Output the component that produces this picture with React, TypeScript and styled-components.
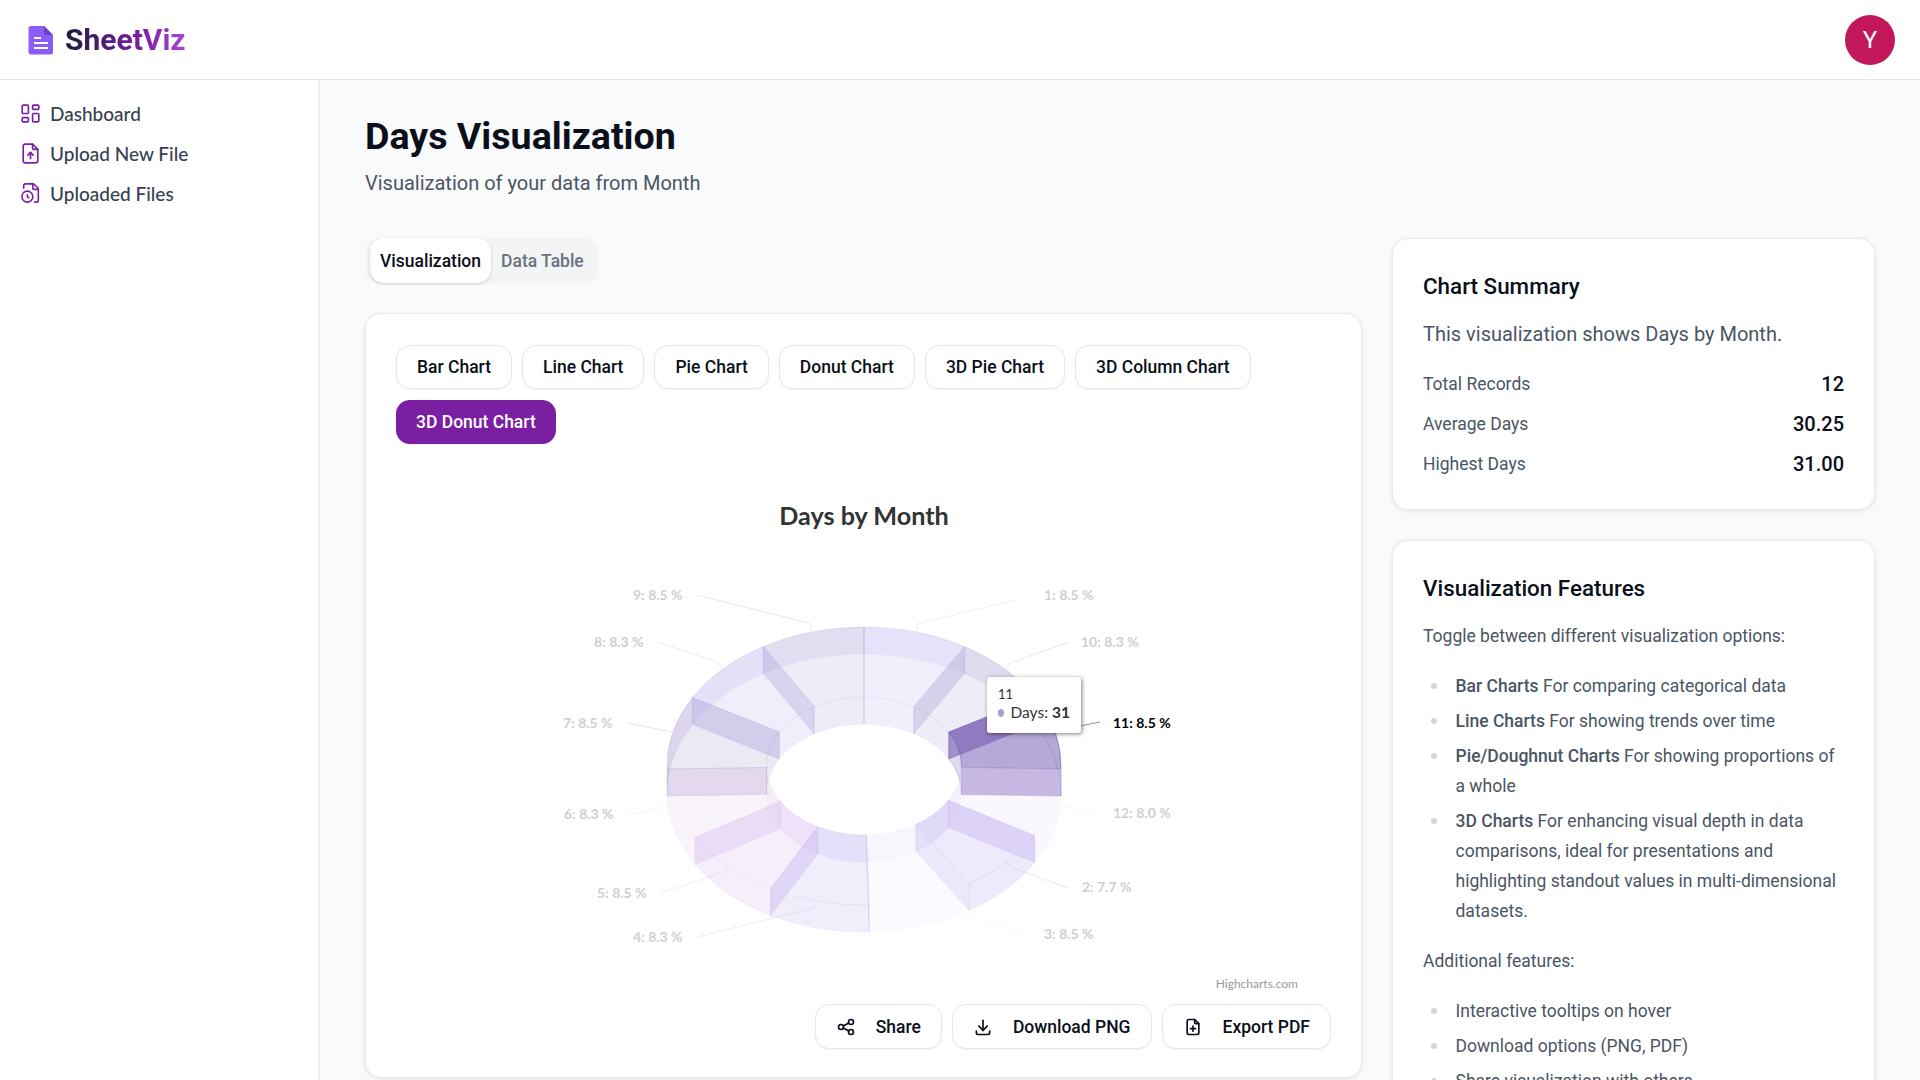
import { FC } from 'react';
import styled, { createGlobalStyle } from 'styled-components';
import { FileClock } from 'lucide-react';
import {
    TbDownload,
    TbFilePlus,
    TbFileUpload,
    TbLayoutDashboard,
    TbShare,
} from 'react-icons/tb';

const GlobalStyle = createGlobalStyle`
    html, body {
        margin: 0;
        height: 100%;
        overflow: hidden;
        background: #f9fafb;
        font-family: Roboto, "Liberation Sans", sans-serif;
    }
    * { box-sizing: border-box; }
`;

const Shell = styled.div`
    height: 100vh;
    display: flex;
    flex-direction: column;
`;

const Header = styled.header`
    height: 80px;
    flex: none;
    background: #fff;
    border-bottom: 1px solid #e5e7eb;
    display: flex;
    align-items: center;
    justify-content: space-between;
    padding: 0 25px 0 28px;
`;

const Brand = styled.div`
    display: flex;
    align-items: center;
    gap: 11px;
`;

const BrandName = styled.span`
    font-size: 30px;
    font-weight: 700;
    background: linear-gradient(90deg, #1f1b3d 0%, #7b1fa2 62%, #ab47d6 100%);
    -webkit-background-clip: text;
    background-clip: text;
    color: transparent;
`;

const Avatar = styled.div`
    width: 50px;
    height: 50px;
    border-radius: 50%;
    background: #c2185b;
    color: #fff;
    font-size: 24px;
    display: flex;
    align-items: center;
    justify-content: center;
`;

const Body = styled.div`
    flex: 1;
    min-height: 0;
    display: flex;
`;

const Sidebar = styled.nav`
    width: 320px;
    flex: none;
    background: #fff;
    border-right: 2px solid #eef0f3;
    padding: 18px 18px;
    display: flex;
    flex-direction: column;
    gap: 10px;
`;

const NavItem = styled.a`
    height: 30px;
    display: flex;
    align-items: center;
    gap: 7px;
    font-family: Lato, sans-serif;
    font-size: 19px;
    font-weight: 500;
    color: #374151;
`;

const NavIcon = styled.span`
    width: 25px;
    flex: none;
    display: flex;
    align-items: center;
    justify-content: center;
    color: #7b1fa2;
`;

const Main = styled.main`
    flex: 1;
    min-width: 0;
    padding: 30px 45px 0;
    overflow: hidden;
`;

const Title = styled.h1`
    margin: 0;
    font-size: 37.6px;
    line-height: 52px;
    font-weight: 700;
    color: #0b0f1a;
`;

const Subtitle = styled.p`
    margin: 7px 0 0;
    font-size: 20px;
    line-height: 28px;
    color: #4b5563;
`;

const Columns = styled.div`
    margin-top: 41px;
    display: grid;
    grid-template-columns: minmax(0, 1fr) 483px;
    column-gap: 30px;
    align-items: start;
`;

const Tabs = styled.div`
    display: inline-flex;
    height: 45px;
    padding: 0 5px;
    background: #f3f4f6;
    border-radius: 14px;
`;

const Tab = styled.div<{ $active?: boolean }>`
    display: flex;
    align-items: center;
    padding: 0 10px;
    font-size: 17.5px;
    font-weight: 500;
    border-radius: 14px;
    color: ${(p) => (p.$active ? '#0b0f1a' : '#6b7280')};
    background: ${(p) => (p.$active ? '#fff' : 'transparent')};
    box-shadow: ${(p) => (p.$active ? '0 1px 3px rgba(0,0,0,.18)' : 'none')};
`;

const Card = styled.section`
    background: #fff;
    border: 1px solid #e9ebef;
    border-radius: 16px;
    box-shadow: 0 1px 4px rgba(0, 0, 0, 0.1);
    padding: 30px;
`;

const ChartCard = styled(Card)`
    margin-top: 30px;
    height: 765px;
`;

const ChipRow = styled.div`
    display: flex;
    flex-wrap: wrap;
    gap: 11px 10px;
    padding-top: 1px;
`;

const Chip = styled.button<{ $active?: boolean }>`
    height: 44px;
    padding: 0 20px;
    border-radius: 14px;
    font-family: inherit;
    font-size: 17.5px;
    font-weight: 500;
    border: ${(p) => (p.$active ? 'none' : '1px solid #e5e7eb')};
    background: ${(p) => (p.$active ? '#7b1fa2' : '#fff')};
    color: ${(p) => (p.$active ? '#fff' : '#0b0f1a')};
    box-shadow: 0 1px 2px rgba(0, 0, 0, 0.05);
`;

const ChartBox = styled.div`
    position: relative;
    margin-top: 49px;
    width: 935px;
    height: 500px;
    svg { display: block; }
`;

const ChartText = styled.text<{ $hot?: boolean }>`
    font-family: Lato, sans-serif;
    font-size: 14px;
    font-weight: 700;
    fill: ${(p) => (p.$hot ? '#000' : '#cfcfcf')};
`;

const ChartTitle = styled.text`
    font-family: Lato, sans-serif;
    font-size: 25.2px;
    font-weight: 700;
    fill: #333;
`;

const Credits = styled.text`
    font-family: Lato, sans-serif;
    font-size: 12px;
    fill: #999;
`;

const Tooltip = styled.div`
    position: absolute;
    left: 591px;
    top: 184px;
    width: 94px;
    height: 56px;
    padding: 9px 11px;
    background: #fff;
    border-radius: 3px;
    box-shadow: 1px 1px 4px rgba(0, 0, 0, 0.5);
    font-family: Lato, sans-serif;
    color: #333;
`;

const TooltipHead = styled.div`
    font-size: 13px;
    line-height: 17px;
`;

const TooltipRow = styled.div`
    display: flex;
    align-items: center;
    font-size: 15.5px;
    line-height: 19px;
    white-space: nowrap;
    b { margin-left: 4px; font-weight: 700; }
`;

const Dot = styled.i`
    width: 8px;
    height: 8px;
    margin-right: 6px;
    border-radius: 50%;
    background: #ae9dd2;
`;

const Actions = styled.div`
    margin-top: 11px;
    display: flex;
    justify-content: flex-end;
    gap: 10px;
`;

const ActionButton = styled.button`
    height: 45px;
    padding: 0 20px;
    display: flex;
    align-items: center;
    gap: 20px;
    background: #fff;
    border: 1px solid #e5e7eb;
    border-radius: 14px;
    box-shadow: 0 1px 2px rgba(0, 0, 0, 0.05);
    font-family: inherit;
    font-size: 17.5px;
    font-weight: 500;
    color: #0b0f1a;
`;

const Side = styled.aside`
    display: flex;
    flex-direction: column;
    gap: 30px;
`;

const CardTitle = styled.h2`
    margin: 0;
    font-size: 22.4px;
    line-height: 35px;
    font-weight: 500;
    color: #0b0f1a;
`;

const Lead = styled.p`
    margin: 15px 0 0;
    font-size: 20px;
    line-height: 30px;
    color: #4b5563;
`;

const Stats = styled.dl`
    margin: 20px 0 0;
    display: flex;
    flex-direction: column;
    gap: 10px;
`;

const Stat = styled.div`
    height: 30px;
    display: flex;
    align-items: center;
    justify-content: space-between;
    dt { font-size: 17.5px; color: #4b5563; }
    dd { margin: 0; font-size: 20px; font-weight: 500; color: #0b0f1a; }
`;

const Para = styled.p`
    margin: 20px 0 0;
    font-size: 17.5px;
    line-height: 30px;
    color: #4b5563;
    ${CardTitle} + & { margin-top: 15px; }
`;

const BulletList = styled.ul`
    margin: 20px 0 0;
    padding: 0 0 0 32.5px;
    list-style: none;
    font-size: 17.5px;
    line-height: 30px;
    color: #4b5563;
    li { position: relative; margin-top: 5px; }
    li:first-child { margin-top: 0; }
    li::before {
        content: '';
        position: absolute;
        left: -25px;
        top: 12px;
        width: 6px;
        height: 6px;
        border-radius: 50%;
        background: #d1d5db;
    }
    b { font-weight: 500; }
`;

const chips = ['Bar Chart', 'Line Chart', 'Pie Chart', 'Donut Chart', '3D Pie Chart', '3D Column Chart', '3D Donut Chart'];

const CX = 864;
const CY = 766;
const OUT = { rx: 197, ry: 139 };
const INN = { rx: 97.5, ry: 69 };
const DEPTH = 27;

const slices = [
    { id: 1, days: 31, color: '#b9aff0' },
    { id: 10, days: 30, color: '#aaa0d2' },
    { id: 11, days: 31, color: '#765ab4' },
    { id: 12, days: 29, color: '#e6d7fa' },
    { id: 2, days: 28, color: '#aa96eb' },
    { id: 3, days: 31, color: '#ebe6fa' },
    { id: 4, days: 30, color: '#b9aaf0' },
    { id: 5, days: 31, color: '#cdaff0' },
    { id: 6, days: 30, color: '#e0c8ec' },
    { id: 7, days: 31, color: '#a08cca' },
    { id: 8, days: 30, color: '#b4aaeb' },
    { id: 9, days: 31, color: '#aaa5d7' },
];

const labels = [
    { id: 1, text: '1: 8.5 %', x: 1044, y: 600, line: '1015,600 917,624 916,632' },
    { id: 10, text: '10: 8.3 %', x: 1081, y: 647, line: '1069,642 1010,663 1005,668' },
    { id: 11, text: '11: 8.5 %', x: 1113, y: 728, line: '1100,722 1080,726', hot: true },
    { id: 12, text: '12: 8.0 %', x: 1113, y: 818, line: '1053,803 1100,814' },
    { id: 2, text: '2: 7.7 %', x: 1082, y: 892, line: '1007,863 1012,868 1069,888' },
    { id: 3, text: '3: 8.5 %', x: 1044, y: 939, line: '923,905 1027,933' },
    { id: 4, text: '4: 8.3 %', x: 633, y: 942, line: '697,937 813,908 815,902' },
    { id: 5, text: '5: 8.5 %', x: 597, y: 898, line: '661,893 723,872 727,867' },
    { id: 6, text: '6: 8.3 %', x: 564, y: 819, line: '628,815 673,805' },
    { id: 7, text: '7: 8.5 %', x: 563, y: 728, line: '627,723 672,732' },
    { id: 8, text: '8: 8.3 %', x: 594, y: 647, line: '658,642 717,662 723,668' },
    { id: 9, text: '9: 8.5 %', x: 633, y: 600, line: '697,595 809,623 812,631' },
];

type Ring = { rx: number; ry: number };

const pt = (r: Ring, a: number, dy = 0) =>
    `${(CX + r.rx * Math.sin(a)).toFixed(2)} ${(CY - r.ry * Math.cos(a) + dy).toFixed(2)}`;

const arc = (r: Ring, to: number, sweep: number, dy = 0) =>
    `A${r.rx} ${r.ry} 0 0 ${sweep} ${pt(r, to, dy)}`;

const band = (r: Ring, a0: number, a1: number) =>
    `M${pt(r, a0)} ${arc(r, a1, 1)} L${pt(r, a1, DEPTH)} ${arc(r, a0, 0, DEPTH)} Z`;

const side = (a: number) =>
    `M${pt(OUT, a)} L${pt(INN, a)} L${pt(INN, a, DEPTH)} L${pt(OUT, a, DEPTH)} Z`;

const face = (a0: number, a1: number) =>
    `M${pt(OUT, a0)} ${arc(OUT, a1, 1)} L${pt(INN, a1)} ${arc(INN, a0, 0)} Z`;

const total = slices.reduce((s, v) => s + v.days, 0);
let running = 0;
const wedges = slices.map((s) => {
    const a0 = (running / total) * Math.PI * 2;
    running += s.days;
    const a1 = (running / total) * Math.PI * 2;
    return { ...s, a0, a1 };
});

const colorOf = (id: number) => slices.find((s) => s.id === id)?.color ?? '#ccc';

const Donut: FC = () => (
    <svg width={935} height={500} viewBox="396 493 935 500">
        <ChartTitle x={864} y={525} textAnchor="middle">Days by Month</ChartTitle>
        {labels.map((l) => (
            <polyline
                key={l.text}
                points={l.line}
                fill="none"
                stroke={l.hot ? '#9b85c9' : colorOf(l.id)}
                strokeOpacity={l.hot ? 1 : 0.25}
                strokeWidth={1}
            />
        ))}
        {wedges.map((w) => {
            const hot = w.id === 11;
            const parts = [
                { d: band(OUT, w.a0, w.a1), alpha: hot ? 0.02 : 0.2 },
                { d: band(INN, w.a0, w.a1), alpha: hot ? 0.22 : 0.2 },
                { d: side(w.a0), alpha: hot ? 0.53 : 0.2 },
                { d: side(w.a1), alpha: hot ? 0.53 : 0.2 },
                { d: face(w.a0, w.a1), alpha: hot ? 0.53 : 0.2 },
            ];
            return (
                <g key={w.id}>
                    {parts.map((part, i) => (
                        <path
                            key={i}
                            d={part.d}
                            fill={w.color}
                            fillOpacity={part.alpha}
                            stroke={w.color}
                            strokeOpacity={hot ? 0.3 : 0.1}
                            strokeWidth={1}
                        />
                    ))}
                </g>
            );
        })}
        {labels.map((l) => (
            <ChartText key={l.text} x={l.x} y={l.y} $hot={l.hot}>{l.text}</ChartText>
        ))}
        <Credits x={1298} y={988} textAnchor="end">Highcharts.com</Credits>
    </svg>
);

const LogoMark: FC = () => (
    <svg width="26" height="30" viewBox="0 0 26 30">
        <path d="M3 1h13l9 9v17a2.500 2.500 0 0 1-2.500 2.500h-19.500a2.500 2.500 0 0 1-2.500-2.500v-23.500a2.500 2.500 0 0 1 2.500-2.500z" fill="#8b5cf6" />
        <path d="M16 1l9 9h-6.500a2.500 2.500 0 0 1-2.500-2.500z" fill="#6d3fd1" />
        <path d="M6 13h7M6 18h14M6 23h14" stroke="#fff" strokeWidth="2" fill="none" />
    </svg>
);

export default function App() {
    return (
        <Shell>
            <GlobalStyle />
            <Header>
                <Brand>
                    <LogoMark />
                    <BrandName>SheetViz</BrandName>
                </Brand>
                <Avatar>Y</Avatar>
            </Header>
            <Body>
                <Sidebar>
                    <NavItem><NavIcon><TbLayoutDashboard size={25} strokeWidth={1.6} /></NavIcon>Dashboard</NavItem>
                    <NavItem><NavIcon><TbFileUpload size={25} strokeWidth={1.6} /></NavIcon>Upload New File</NavItem>
                    <NavItem><NavIcon><FileClock size={22} strokeWidth={1.75} /></NavIcon>Uploaded Files</NavItem>
                </Sidebar>
                <Main>
                    <Title>Days Visualization</Title>
                    <Subtitle>Visualization of your data from Month</Subtitle>
                    <Columns>
                        <div>
                            <Tabs>
                                <Tab $active>Visualization</Tab>
                                <Tab>Data Table</Tab>
                            </Tabs>
                            <ChartCard>
                                <ChipRow>
                                    {chips.map((c) => (
                                        <Chip key={c} $active={c === '3D Donut Chart'}>{c}</Chip>
                                    ))}
                                </ChipRow>
                                <ChartBox>
                                    <Donut />
                                    <Tooltip>
                                        <TooltipHead>11</TooltipHead>
                                        <TooltipRow><Dot />Days: <b>31</b></TooltipRow>
                                    </Tooltip>
                                </ChartBox>
                                <Actions>
                                    <ActionButton><TbShare size={20} />Share</ActionButton>
                                    <ActionButton><TbDownload size={20} />Download PNG</ActionButton>
                                    <ActionButton><TbFilePlus size={20} />Export PDF</ActionButton>
                                </Actions>
                            </ChartCard>
                        </div>
                        <Side>
                            <Card>
                                <CardTitle>Chart Summary</CardTitle>
                                <Lead>This visualization shows Days by Month.</Lead>
                                <Stats>
                                    <Stat><dt>Total Records</dt><dd>12</dd></Stat>
                                    <Stat><dt>Average Days</dt><dd>30.25</dd></Stat>
                                    <Stat><dt>Highest Days</dt><dd>31.00</dd></Stat>
                                </Stats>
                            </Card>
                            <Card>
                                <CardTitle>Visualization Features</CardTitle>
                                <Para>Toggle between different visualization options:</Para>
                                <BulletList>
                                    <li><b>Bar Charts</b> For comparing categorical data</li>
                                    <li><b>Line Charts</b> For showing trends over time</li>
                                    <li><b>Pie/Doughnut Charts</b> For showing proportions of a whole</li>
                                    <li><b>3D Charts</b> For enhancing visual depth in data comparisons, ideal for presentations and highlighting standout values in multi-dimensional datasets.</li>
                                </BulletList>
                                <Para>Additional features:</Para>
                                <BulletList>
                                    <li>Interactive tooltips on hover</li>
                                    <li>Download options (PNG, PDF)</li>
                                    <li>Share visualization with others</li>
                                </BulletList>
                            </Card>
                        </Side>
                    </Columns>
                </Main>
            </Body>
        </Shell>
    );
}
